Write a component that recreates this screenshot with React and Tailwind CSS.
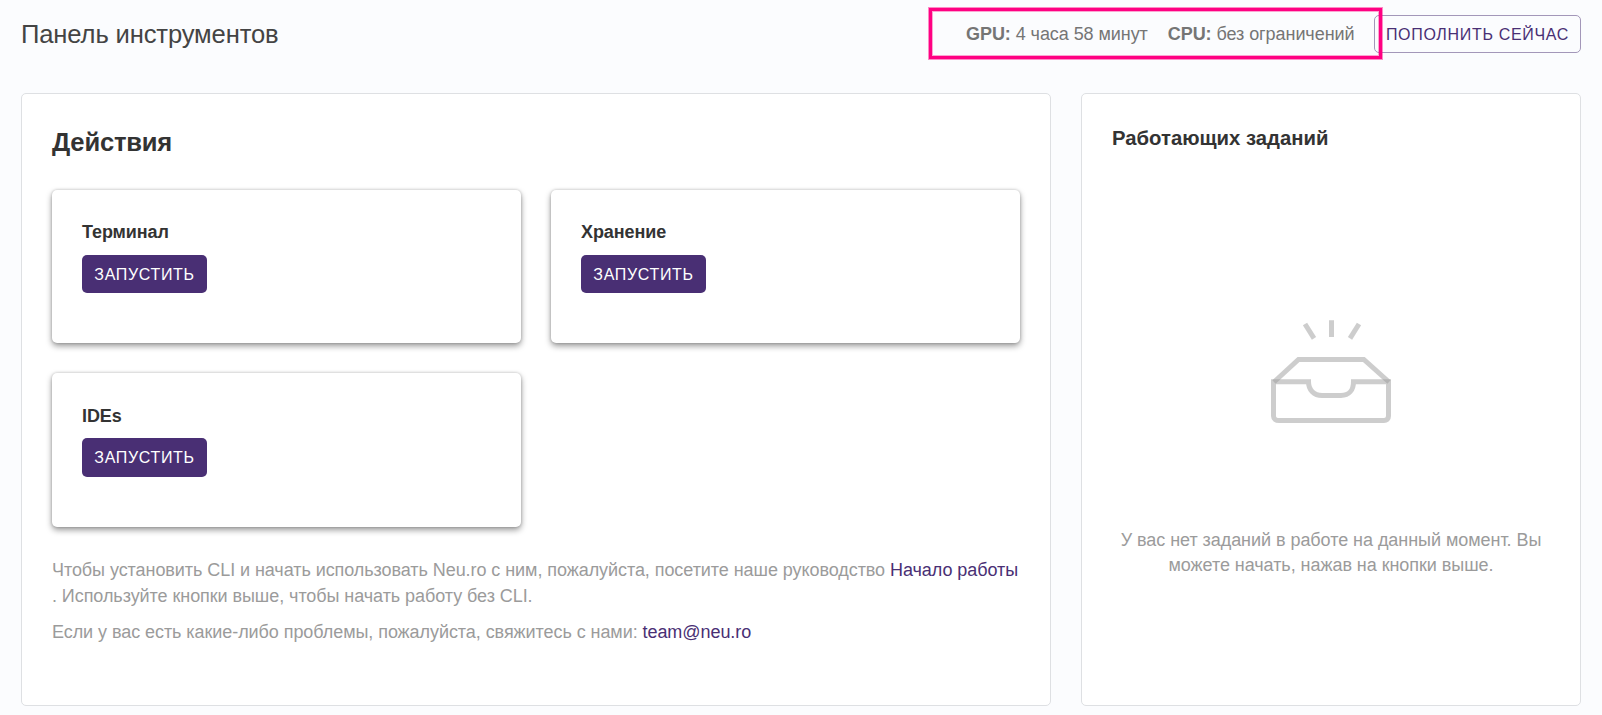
function LaunchButton({ className }) {
  return (
    <button
      className={`flex w-[125px] items-center justify-center rounded-[5px] bg-[#492f74] pt-[1px] text-[16px] tracking-[0.66px] text-white ${className}`}
    >
      ЗАПУСТИТЬ
    </button>
  );
}

function ActionCard({ title, titleClass = "mb-[10px]", padClass = "pt-[29px]", buttonClass = "h-[38px]" }) {
  return (
    <div
      className={`rounded-[5px] bg-white px-[30px] shadow-[0_3px_6px_rgba(0,0,0,0.4),0_0_3px_rgba(0,0,0,0.2)] ${padClass}`}
    >
      <h3 className={`text-[18px] leading-[26px] font-bold tracking-[-0.1px] text-[#333] ${titleClass}`}>{title}</h3>
      <LaunchButton className={buttonClass} />
    </div>
  );
}

function InboxIcon() {
  return (
    <svg className="ml-[2px]" width="122" height="104" viewBox="0 0 122 104" fill="none" stroke="#9b9b9b" strokeOpacity="0.5" strokeWidth="5">
      <path d="M34 4L43 18.300M60.500 0.300V17M88 4L79 18.300" />
      <path d="M3 62L27.500 39.500H92.800L118 62" />
      <path d="M2.500 59.300V61.700H37.500C37.500 70 43 75.500 51 75.500H70C78 75.500 82.500 70 82.500 61.700H117.500V96C117.500 99 115.500 100.500 113 100.500H8C5 100.500 2.500 99 2.500 96V59.300" />
    </svg>
  );
}

export default function App() {
  return (
    <div className="h-[715px] w-[1602px] overflow-hidden bg-[#fbfcfe] px-[21px] pt-[15px] font-['Liberation_Sans',Arial,sans-serif]">
      <header className="flex h-[38px] items-center justify-between">
        <h1 className="text-[25.6px] leading-[38px] tracking-[-0.14px] text-[#444]">Панель инструментов</h1>
        <div className="flex items-center">
          <div className="relative z-10 -mt-[1px] -mr-[8px] flex h-[51px] w-[453px] items-center gap-[20px] border-[3px] border-[#ff0082] pt-[1px] pl-[34px] text-[18px] tracking-[-0.065px] whitespace-nowrap text-[#757575] shadow-[0_0_0_1px_rgba(255,0,130,0.45),inset_0_0_0_1px_rgba(255,0,130,0.35)]">
            <span><b>GPU:</b> 4 часа 58 минут</span>
            <span><b>CPU:</b> без ограничений</span>
          </div>
          <button className="flex h-[38px] w-[207px] items-center justify-center rounded-[5px] border border-[#a397b9] pt-[1px] text-[16px] tracking-[0.68px] text-[#492f74]">
            ПОПОЛНИТЬ СЕЙЧАС
          </button>
        </div>
      </header>
      <main className="mt-[40px] flex gap-[30px]">
        <section className="h-[613px] w-[1030px] rounded-[5px] border border-[#dee0e3] bg-white px-[30px] pt-[30px]">
          <h2 className="text-[25.6px] leading-[36px] font-bold tracking-[-0.2px] text-[#333]">Действия</h2>
          <div className="mt-[30px] grid grid-cols-[469px_469px] grid-rows-[153px_154px] gap-[30px]">
            <ActionCard title="Терминал" />
            <ActionCard title="Хранение" />
            <ActionCard title="IDEs" padClass="pt-[30px]" titleClass="mb-[9px]" buttonClass="h-[39px]" />
          </div>
          <div className="mt-[30px] text-[18px] leading-[26px] tracking-[-0.064px] whitespace-nowrap text-[#9b9b9b]">
            <p>
              Чтобы установить CLI и начать использовать Neu.ro с ним, пожалуйста, посетите наше руководство{" "}
              <a className="text-[#492f74]">Начало работы</a>
              <br />. Используйте кнопки выше, чтобы начать работу без CLI.
            </p>
            <p className="mt-[10px]">
              Если у вас есть какие-либо проблемы, пожалуйста, свяжитесь с нами:{" "}
              <a className="text-[#492f74]">team@neu.ro</a>
            </p>
          </div>
        </section>
        <section className="flex h-[613px] w-[500px] flex-col rounded-[5px] border border-[#dee0e3] bg-white px-[30px] pt-[30px]">
          <h2 className="text-[20.3px] leading-[28px] font-bold text-[#333]">Работающих заданий</h2>
          <div className="mt-[168px] flex flex-col items-center">
            <InboxIcon />
            <p className="mt-[104px] text-center text-[18px] leading-[25px] tracking-[-0.05px] whitespace-nowrap text-[#9b9b9b]">
              У вас нет заданий в работе на данный момент. Вы
              <br />
              можете начать, нажав на кнопки выше.
            </p>
          </div>
        </section>
      </main>
    </div>
  );
}
